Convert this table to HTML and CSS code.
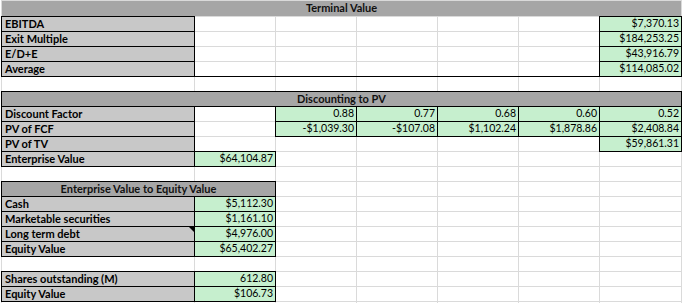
FILE: index.html
```html
<!DOCTYPE html>
<html>
<head>
<meta charset="utf-8">
<link rel="stylesheet" href="styles.css">
</head>
<body>
<div class="sheet">
  <div class="c hdr all">Terminal Value</div>

  <div class="c lbl">EBITDA</div><div class="c"></div><div class="c"></div><div class="c"></div><div class="c"></div><div class="c"></div><div class="c num">$7,370.13</div>
  <div class="c lbl">Exit Multiple</div><div class="c"></div><div class="c"></div><div class="c"></div><div class="c"></div><div class="c"></div><div class="c num">$184,253.25</div>
  <div class="c lbl">E/D+E</div><div class="c"></div><div class="c"></div><div class="c"></div><div class="c"></div><div class="c"></div><div class="c num">$43,916.79</div>
  <div class="c lbl">Average</div><div class="c bl"></div><div class="c bl"></div><div class="c bl"></div><div class="c bl"></div><div class="c bl"></div><div class="c num">$114,085.02</div>

  <div class="c"></div><div class="c"></div><div class="c"></div><div class="c"></div><div class="c"></div><div class="c"></div><div class="c"></div>

  <div class="c hdr box all">Discounting to PV</div>

  <div class="c lbl">Discount Factor</div><div class="c"></div><div class="c num">0.88</div><div class="c num">0.77</div><div class="c num">0.68</div><div class="c num">0.60</div><div class="c num">0.52</div>
  <div class="c lbl">PV of FCF</div><div class="c"></div><div class="c num">-$1,039.30</div><div class="c num">-$107.08</div><div class="c num">$1,102.24</div><div class="c num">$1,878.86</div><div class="c num">$2,408.84</div>
  <div class="c lbl">PV of TV</div><div class="c"></div><div class="c"></div><div class="c"></div><div class="c"></div><div class="c"></div><div class="c num">$59,861.31</div>
  <div class="c lbl">Enterprise Value</div><div class="c num">$64,104.87</div><div class="c"></div><div class="c"></div><div class="c"></div><div class="c"></div><div class="c"></div>

  <div class="c"></div><div class="c"></div><div class="c"></div><div class="c"></div><div class="c"></div><div class="c"></div><div class="c"></div>

  <div class="c hdr box two">Enterprise Value to Equity Value</div><div class="c"></div><div class="c"></div><div class="c"></div><div class="c"></div><div class="c"></div>
  <div class="c lbl">Cash</div><div class="c num">$5,112.30</div><div class="c"></div><div class="c"></div><div class="c"></div><div class="c"></div><div class="c"></div>
  <div class="c lbl">Marketable securities</div><div class="c num">$1,161.10</div><div class="c"></div><div class="c"></div><div class="c"></div><div class="c"></div><div class="c"></div>
  <div class="c lbl note">Long term debt</div><div class="c num">$4,976.00</div><div class="c"></div><div class="c"></div><div class="c"></div><div class="c"></div><div class="c"></div>
  <div class="c lbl">Equity Value</div><div class="c num">$65,402.27</div><div class="c"></div><div class="c"></div><div class="c"></div><div class="c"></div><div class="c"></div>

  <div class="c"></div><div class="c"></div><div class="c"></div><div class="c"></div><div class="c"></div><div class="c"></div><div class="c"></div>

  <div class="c lbl">Shares outstanding (M)</div><div class="c num">612.80</div><div class="c"></div><div class="c"></div><div class="c"></div><div class="c"></div><div class="c"></div>
  <div class="c lbl">Equity Value</div><div class="c num">$106.73</div><div class="c"></div><div class="c"></div><div class="c"></div><div class="c"></div><div class="c"></div>

  <div class="c"></div><div class="c"></div><div class="c"></div><div class="c"></div><div class="c"></div><div class="c"></div><div class="c"></div>
</div>
</body>
</html>
```
FILE: styles.css
```css
html, body {
  margin: 0;
  padding: 0;
  background: #fff;
  overflow: hidden;
}

.sheet {
  display: grid;
  grid-template-columns: 192px repeat(5, 80px) 81px;
  grid-template-rows: 15px repeat(20, 14px);
  gap: 1px;
  background: #dadada;
  padding: 1px 1px 0 1px;
  margin-left: 1px;
  width: max-content;
}

.c {
  background: #fff;
  font-family: Lato, "Liberation Sans", sans-serif;
  font-size: 10.5px;
  line-height: 13px;
  color: #000;
  padding: 0 2px;
  white-space: nowrap;
  position: relative;
}

.lbl {
  background: #c8c8c8;
  font-size: 11px;
  font-weight: 700;
  padding-left: 3px;
  box-shadow: 0 0 0 1px #000;
}

.num {
  background: #c6efce;
  text-align: right;
  box-shadow: 0 0 0 1px #000;
}

.hdr {
  background: #a6a6a6;
  font-size: 11px;
  font-weight: 700;
  text-align: center;
  color: #111;
}

.hdr.box {
  box-shadow: 0 0 0 1px #000;
}

.all {
  grid-column: 1 / -1;
  line-height: 14px;
}

.two {
  grid-column: 1 / 3;
}

.bl::after {
  content: "";
  position: absolute;
  left: -1px;
  right: -1px;
  bottom: -1px;
  height: 1px;
  background: #000;
}

.note::after {
  content: "";
  position: absolute;
  top: 0;
  right: 0;
  width: 0;
  height: 0;
  border-top: 5px solid #000;
  border-left: 5px solid transparent;
}
```
